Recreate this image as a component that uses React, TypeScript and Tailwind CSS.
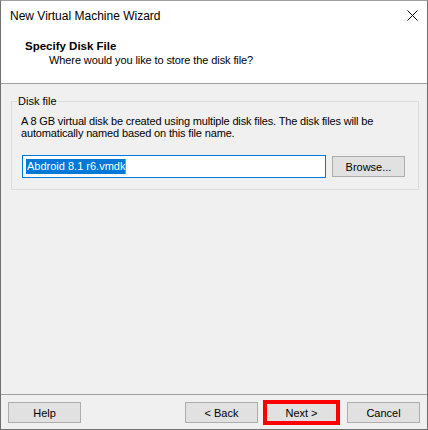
import React from "react";

function Btn({ label, extra = "" }: { label: string; extra?: string }) {
  return (
    <div
      className={`w-[73px] h-[21px] flex items-center justify-center bg-[#e1e1e1] border border-[#adadad] text-[11px] leading-[12px] ${extra}`}
    >
      {label}
    </div>
  );
}

export default function App() {
  return (
    <div className="w-[428px] h-[430px] flex flex-col bg-[#f0f0f0] border border-[#707070] border-t-[#a0a0a0] font-['Liberation_Sans',Arial,sans-serif] text-black overflow-hidden">
      {/* title bar */}
      <div className="h-[30px] shrink-0 bg-white flex justify-between pl-[9px] pr-[9px]">
        <div className="mt-[8px] text-[12px] leading-[14px]">New Virtual Machine Wizard</div>
        <svg className="mt-[9px]" width="11" height="11" viewBox="0 0 11 11">
          <path d="M0.5 0.5L10.5 10.5M10.5 0.5L0.5 10.5" stroke="#000" strokeWidth="1" fill="none" />
        </svg>
      </div>
      {/* header */}
      <div className="h-[53px] shrink-0 bg-white border-b border-[#a0a0a0] pt-[8px] pl-[24px]">
        <div className="text-[11.5px] font-bold leading-[14px]">Specify Disk File</div>
        <div className="pl-[24px] text-[11px] leading-[14px] tracking-[-0.1px]">Where would you like to store the disk file?</div>
      </div>
      {/* body */}
      <div className="flex-1">
        <div className="relative mt-[17px] ml-[10px] mr-[8px] border border-[#dcdcdc] pt-[13px] pl-[9px] pb-[11px]">
          <span className="absolute -top-[7px] left-[5px] bg-[#f0f0f0] px-[1px] text-[11px] leading-[12px]">
            Disk file
          </span>
          <div className="text-[11px] leading-[12px] tracking-[-0.15px]">
            A 8 GB virtual disk be created using multiple disk files. The disk files will be
            <br />
            automatically named based on this file name.
          </div>
          <div className="mt-[16px] ml-[1px] flex items-center gap-[6px]">
            <div className="w-[304px] h-[23px] bg-white border border-[#0078d7] flex items-center pl-[3px]">
              <span className="inline-block h-[15px] leading-[15px] bg-[#0078d7] text-white text-[11px] pl-[1px] border-r border-[#f08020]">
                Abdroid 8.1 r6.vmdk
              </span>
            </div>
            <Btn label="Browse..." />
          </div>
        </div>
      </div>
      {/* footer */}
      <div className="h-[35px] shrink-0 border-t border-[#a0a0a0] pt-[7px] pl-[7px] pr-[7px] flex items-start">
        <Btn label="Help" />
        <div className="flex-1" />
        <Btn label="< Back" />
        <Btn label="Next >" extra="ml-[7px] outline-4 outline-[#ff0000] outline-offset-[-2px]" />
        <Btn label="Cancel" extra="ml-[9px]" />
      </div>
    </div>
  );
}
